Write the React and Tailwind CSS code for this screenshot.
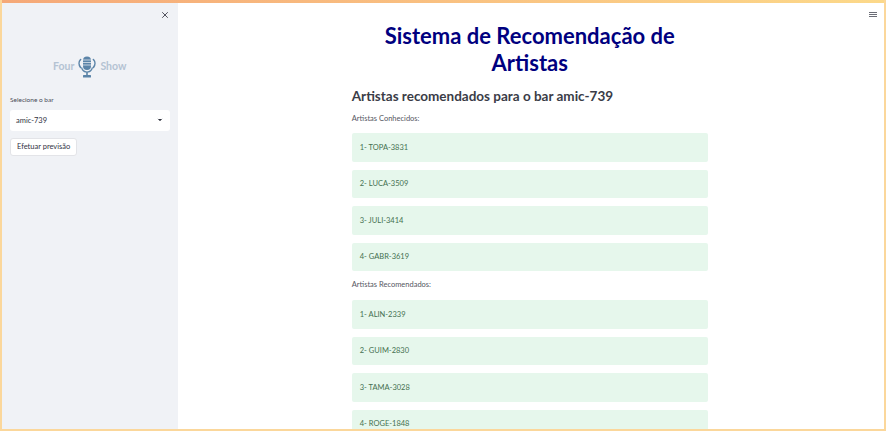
import React from 'react';
import { X, ChevronDown } from 'lucide-react';

const known = ['1- TOPA-3831', '2- LUCA-3509', '3- JULI-3414', '4- GABR-3619'];
const recommended = ['1- ALIN-2339', '2- GUIM-2830', '3- TAMA-3028', '4- ROGE-1848'];

function Row({ text }) {
  return (
    <div className="h-[28.5px] shrink-0 flex items-center px-[8px] rounded-[2px] bg-[#e6f7ec] text-[7.500px] text-[#44704f]">
      {text}
    </div>
  );
}

function MicLogo() {
  return (
    <svg width="20" height="22" viewBox="0 0 20 22" fill="none" className="shrink-0">
      <rect x="6" y="0.5" width="8" height="13.5" rx="4" fill="#5b84a8" />
      <path d="M6 4h8M6 6.5h8M6 9h8" stroke="#dfe6ee" strokeWidth="0.8" />
      <path d="M3.6 3.5C1.6 5.5 1.6 9 3.6 11.5" stroke="#5b84a8" strokeWidth="1.6" strokeLinecap="round" />
      <path d="M16.4 3.5C18.4 5.5 18.4 9 16.4 11.5" stroke="#5b84a8" strokeWidth="1.6" strokeLinecap="round" />
      <path d="M4.5 11.5C5.5 15 8 16 10 16s4.5-1 5.500-4.500" stroke="#5b84a8" strokeWidth="1.2" />
      <path d="M10 16v3.500" stroke="#5b84a8" strokeWidth="1.6" />
      <rect x="6" y="19" width="8" height="2.500" rx="0.5" fill="#5b84a8" />
    </svg>
  );
}

export default function App() {
  return (
    <div className="h-[431px] w-[886px] overflow-hidden flex flex-col bg-white font-['Lato',sans-serif] border-l-2 border-r-2 border-b-2 border-[#fbd79b]">
      <div className="h-[3px] shrink-0 -mx-[2px] bg-gradient-to-r from-[#f5a878] to-[#fcd98a]" />
      <div className="flex flex-1 min-h-0">
        {/* Sidebar */}
        <aside className="w-[175.5px] shrink-0 bg-[#f0f2f6] flex flex-col px-[8px]">
          <div className="flex justify-end pt-[7px]">
            <X className="w-[10px] h-[10px] text-[#31333f]" strokeWidth={2} />
          </div>
          <div className="flex items-center justify-center gap-[3px] mt-[36px] text-[10.500px] font-bold text-[#b4c3d3]">
            <span>Four</span>
            <MicLogo />
            <span>Show</span>
          </div>
          <label className="mt-[17px] text-[6.500px] text-[#4a4c58]">Selecione o bar</label>
          <div className="mt-[5px] h-[21px] rounded-[3px] bg-white flex items-center justify-between px-[6px] text-[7.500px] text-[#31333f]">
            <span>amic-739</span>
            <ChevronDown className="w-[8px] h-[8px] text-[#31333f]" fill="#31333f" strokeWidth={1} />
          </div>
          <button className="mt-[7px] self-start h-[18px] px-[6px] rounded-[3px] bg-white border border-[#e3e4e8] text-[7.500px] text-[#31333f]">
            Efetuar previsão
          </button>
        </aside>

        {/* Main content */}
        <main className="relative flex-1 min-w-0 flex justify-center overflow-hidden pr-[2px]">
          <button className="absolute top-[9px] right-[7px] flex flex-col gap-[1px]">
            <span className="block w-[8px] h-[1px] bg-[#6b6d76]" />
            <span className="block w-[8px] h-[1px] bg-[#6b6d76]" />
            <span className="block w-[8px] h-[1px] bg-[#6b6d76]" />
          </button>
          <div className="w-[356px] flex flex-col">
            <h1 className="mt-[19px] text-center text-[22px] leading-[27px] font-bold text-[#00007f]">
              Sistema de Recomendação de Artistas
            </h1>
            <h2 className="mt-[10px] text-[13.500px] leading-[20px] font-bold text-[#3a3c47]">
              Artistas recomendados para o bar amic-739
            </h2>
            <p className="mt-[7px] text-[7.500px] leading-[12px] text-[#55575f]">Artistas Conhecidos:</p>
            <div className="mt-[8px] flex flex-col gap-[8px]">
              {known.map((t) => <Row key={t} text={t} />)}
            </div>
            <p className="mt-[8px] text-[7.500px] leading-[12px] text-[#55575f]">Artistas Recomendados:</p>
            <div className="mt-[9px] flex flex-col gap-[8px]">
              {recommended.map((t) => <Row key={t} text={t} />)}
            </div>
          </div>
        </main>
      </div>
    </div>
  );
}
